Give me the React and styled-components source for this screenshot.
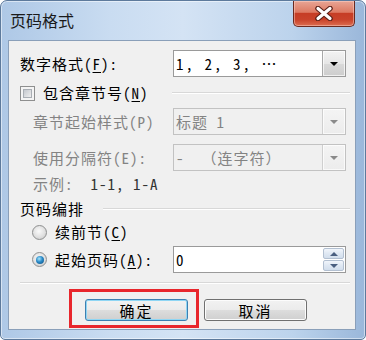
import React from 'react';
import styled, { createGlobalStyle, css } from 'styled-components';

const uiFont = `"Noto Sans Mono CJK SC", "Noto Sans CJK SC", "DejaVu Sans", sans-serif`;

const GlobalStyle = createGlobalStyle`
  html, body {
    margin: 0;
    padding: 0;
    background: #fff;
  }
  body {
    font-family: ${uiFont};
  }
`;

const Window = styled.div`
  width: 366px;
  height: 340px;
  box-sizing: border-box;
  border: 1px solid #5d7a9c;
  border-radius: 7px 7px 5px 5px;
  padding: 0 9px 9px 7px;
  display: flex;
  flex-direction: column;
  background: linear-gradient(90deg, #aec8e6 0%, #c9dcf1 30%, #d4e3f4 50%, #bcd3ec 80%, #9ab7da 100%);
  box-shadow: inset 0 0 0 1px rgba(255, 255, 255, 0.5);
`;

const TitleBar = styled.div`
  height: 39px;
  display: flex;
  align-items: flex-start;
  justify-content: space-between;
`;

const Title = styled.div`
  margin: 9px 0 0 2px;
  font-size: 16px;
  line-height: 20px;
  color: #1a1a1a;
`;

const CloseButton = styled.div`
  width: 62px;
  height: 26px;
  margin-right: 1px;
  box-sizing: border-box;
  border: 1px solid #6b2a20;
  border-top: none;
  border-radius: 0 0 5px 5px;
  display: flex;
  align-items: center;
  justify-content: center;
  background: linear-gradient(180deg, #e8a595 0%, #dd7a63 45%, #c63d25 50%, #c9432b 75%, #dc6d50 100%);
  box-shadow: inset 0 0 0 1px rgba(255, 220, 210, 0.45);
`;

const Client = styled.div`
  flex: 1;
  background: #f0f0f0;
  border: 1px solid #8a9fb9;
  padding: 9px 9px 0 11px;
  display: flex;
  flex-direction: column;
  font-size: 15px;
  letter-spacing: 1px;
  color: #000;
`;

const Row = styled.div`
  display: grid;
  grid-template-columns: 153px 173px;
  align-items: center;
  height: ${({ $h }) => $h}px;
  margin-top: ${({ $mt }) => $mt || 0}px;
  flex-shrink: 0;
`;

const Label = styled.div`
  padding-left: ${({ $indent }) => $indent || 0}px;
  color: ${({ $disabled }) => ($disabled ? '#838383' : '#000')};
  white-space: pre;
  display: flex;
  align-items: center;
  line-height: 20px;
`;

const Key = styled.span`
  text-decoration: underline;
  text-underline-offset: 2px;
`;

const Muted = styled.span`
  color: ${({ $tone }) => $tone};
`;

const Combo = styled.div`
  height: ${({ $h }) => $h || 27}px;
  box-sizing: border-box;
  display: flex;
  border: 1px solid ${({ $disabled }) => ($disabled ? '#c2c2c2' : '#9a9a9a')};
  background: ${({ $disabled }) => ($disabled ? '#f0f0f0' : '#fff')};
`;

const ComboText = styled.span`
  flex: 1;
  display: flex;
  align-items: center;
  padding-left: 2px;
  white-space: pre;
  letter-spacing: ${({ $spread }) => $spread || 1}px;
  color: ${({ $disabled }) => ($disabled ? '#838383' : '#000')};
`;

const DropButton = styled.span`
  width: 22px;
  display: flex;
  align-items: center;
  justify-content: center;
  border-left: 1px solid ${({ $disabled }) => ($disabled ? '#cfcfcf' : '#a8a8a8')};
  background: ${({ $disabled }) =>
    $disabled
      ? 'linear-gradient(180deg, #f4f4f4, #ececec)'
      : 'linear-gradient(180deg, #f3f3f3 0%, #e6e6e6 50%, #d9d9d9 51%, #cdcdcd 100%)'};
  box-shadow: inset 0 0 0 1px rgba(255, 255, 255, 0.7);
`;

const Triangle = styled.span`
  width: 0;
  height: 0;
  border-left: 4px solid transparent;
  border-right: 4px solid transparent;
  border-top: 4px solid ${({ $disabled }) => ($disabled ? '#8a8a8a' : '#000')};
  ${({ $up }) =>
    $up &&
    css`
      border-top: none;
      border-bottom: 4px solid #4a5f80;
    `}
  ${({ $down }) =>
    $down &&
    css`
      border-top-color: #4a5f80;
    `}
`;

const CheckBox = styled.span`
  width: 15px;
  height: 15px;
  box-sizing: border-box;
  border: 1px solid #8e8f8f;
  background: #f4f4f4;
  padding: 2px;
  margin: 0 8px 0 0;
  display: inline-block;
  flex-shrink: 0;
  &::after {
    content: '';
    display: block;
    width: 100%;
    height: 100%;
    background: linear-gradient(135deg, #c4c8ce, #eeeeee);
    border: 1px solid #a9aeb4;
    box-sizing: border-box;
  }
`;

const Radio = styled.span`
  width: 15px;
  height: 15px;
  box-sizing: border-box;
  border-radius: 50%;
  border: 1px solid #8e8f8f;
  background: radial-gradient(circle at 45% 40%, #fafafa 0%, #e0e0e0 55%, #c4c4c4 100%);
  margin: 0 8px 0 ${({ $indent }) => $indent || 0}px;
  display: inline-flex;
  align-items: center;
  justify-content: center;
  flex-shrink: 0;
  ${({ $checked }) =>
    $checked &&
    css`
      &::after {
        content: '';
        width: 8px;
        height: 8px;
        border-radius: 50%;
        background: radial-gradient(circle at 40% 35%, #a8e6fb 0%, #2a8ac8 45%, #0d4a7a 100%);
      }
    `}
`;

const EtchedLine = styled.div`
  height: 0;
  border-top: 1px solid #d8d8d8;
  border-bottom: 1px solid #fff;
  margin-right: ${({ $mr }) => $mr || 0}px;
  margin-left: ${({ $ml }) => $ml || 0}px;
  flex: 1;
`;

const GroupRow = styled.div`
  display: flex;
  align-items: center;
  height: 20px;
  margin-top: 5px;
  flex-shrink: 0;
`;

const Separator = styled(EtchedLine)`
  flex: none;
  margin-top: 9px;
`;

const SpinBox = styled(Combo)`
  align-items: center;
`;

const SpinButtons = styled.span`
  width: 21px;
  height: 23px;
  margin-right: 1px;
  display: flex;
  flex-direction: column;
  gap: 1px;
`;

const SpinHalf = styled.span`
  flex: 1;
  display: flex;
  align-items: center;
  justify-content: center;
  border: 1px solid #b3c0d1;
  border-radius: 2px;
  background: linear-gradient(180deg, #f1f5fb 0%, #dfe8f3 50%, #d2deec 100%);
`;

const Footer = styled.div`
  display: flex;
  align-items: flex-start;
  margin-top: 5px;
  padding-left: 49px;
  flex-shrink: 0;
`;

const Highlight = styled.div`
  border: 3px solid #e8262c;
  padding: 7px 8px 4px 13px;
`;

const Button = styled.div`
  width: 103px;
  height: 22px;
  box-sizing: border-box;
  border: 1px solid ${({ $default }) => ($default ? '#3c7fb1' : '#707070')};
  border-radius: 3px;
  display: flex;
  align-items: center;
  justify-content: center;
  letter-spacing: 2px;
  font-size: 15px;
  color: #000;
  background: linear-gradient(180deg, #f2f2f2 0%, #ebebeb 50%, #dddddd 51%, #cfcfcf 100%);
  box-shadow: inset 0 0 0 1px ${({ $default }) => ($default ? '#8fd6f4' : '#fcfcfc')};
  margin-top: ${({ $mt }) => $mt || 0}px;
  margin-left: ${({ $ml }) => $ml || 0}px;
`;

function CloseGlyph() {
  return (
    <svg width="20" height="15" viewBox="0 0 20 15">
      <path d="M4 2.5 L16 12.5 M16 2.5 L4 12.5" stroke="#5a2018" strokeWidth="5.5" strokeLinecap="round" fill="none" />
      <path d="M4 2.5 L16 12.5 M16 2.5 L4 12.5" stroke="#fff" strokeWidth="3.2" strokeLinecap="round" fill="none" />
    </svg>
  );
}

function Select({ text, disabled, spread }) {
  return (
    <Combo $disabled={disabled}>
      <ComboText $disabled={disabled} $spread={spread}>
        {text}
      </ComboText>
      <DropButton $disabled={disabled}>
        <Triangle $disabled={disabled} />
      </DropButton>
    </Combo>
  );
}

export default function App() {
  return (
    <>
      <GlobalStyle />
      <Window>
        <TitleBar>
          <Title>页码格式</Title>
          <CloseButton>
            <CloseGlyph />
          </CloseButton>
        </TitleBar>
        <Client>
          <Row $h={27}>
            <Label>
              数字格式(<Key>F</Key>):
            </Label>
            <Select text="1, 2, 3, …" spread={2} />
          </Row>
          <Row $h={24} $mt={4}>
            <Label>
              <CheckBox />
              包含章节号(<Key>N</Key>)
            </Label>
            <EtchedLine $ml={-1} $mr={-4} />
          </Row>
          <Row $h={26} $mt={3}>
            <Label $indent={13} $disabled>
              章节起始样式(P)
            </Label>
            <Select text="标题 1" disabled />
          </Row>
          <Row $h={27} $mt={10}>
            <Label $indent={13} $disabled>
              使用分隔符(E):
            </Label>
            <Select text="-  （连字符）" disabled />
          </Row>
          <Row $h={20} $mt={3}>
            <Label $indent={13}>
              <Muted $tone="#838383">示例:  </Muted>
              <Muted $tone="#333">1-1, 1-A</Muted>
            </Label>
          </Row>
          <GroupRow>
            <Label>页码编排</Label>
            <EtchedLine $ml={19} $mr={-4} />
          </GroupRow>
          <Row $h={20} $mt={3}>
            <Label>
              <Radio $indent={12} />
              续前节(<Key>C</Key>)
            </Label>
          </Row>
          <Row $h={27} $mt={4}>
            <Label>
              <Radio $indent={12} $checked />
              起始页码(<Key>A</Key>):
            </Label>
            <SpinBox>
              <ComboText>0</ComboText>
              <SpinButtons>
                <SpinHalf>
                  <Triangle $up />
                </SpinHalf>
                <SpinHalf>
                  <Triangle $down />
                </SpinHalf>
              </SpinButtons>
            </SpinBox>
          </Row>
          <Separator $mr={-4} />
          <Footer>
            <Highlight>
              <Button $default>确定</Button>
            </Highlight>
            <Button $mt={10} $ml={5}>
              取消
            </Button>
          </Footer>
        </Client>
      </Window>
    </>
  );
}
